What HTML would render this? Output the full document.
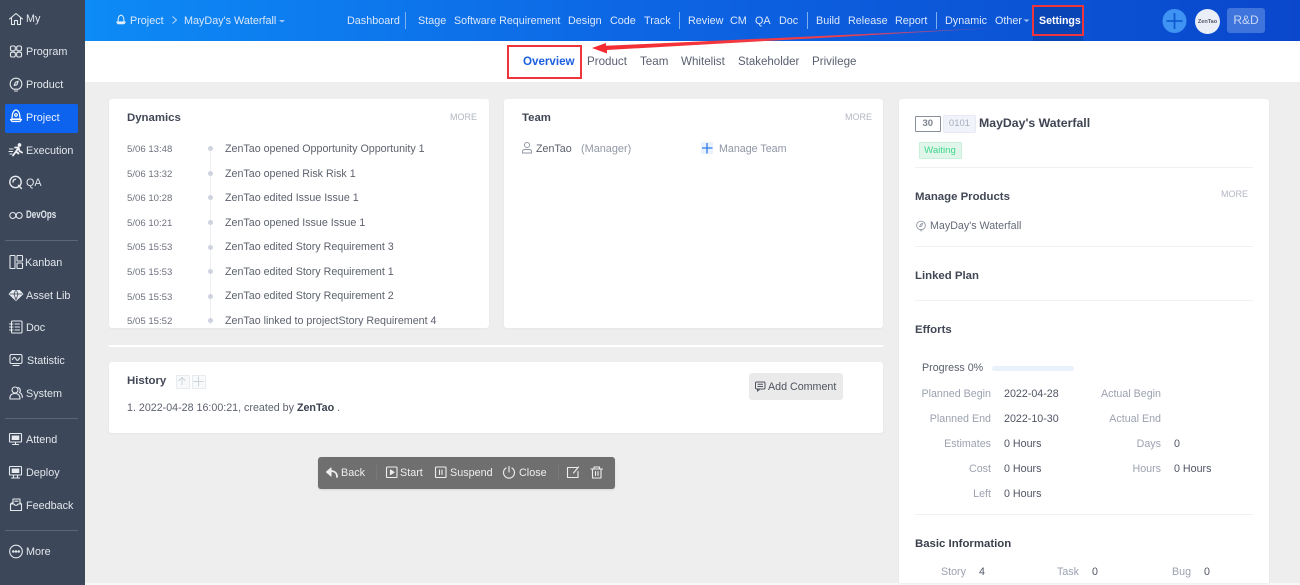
<!DOCTYPE html>
<html lang="en">
<head>
<meta charset="utf-8">
<title>MayDay's Waterfall</title>
<style>
html,body{margin:0;padding:0;background:#eeeeee}
body{width:1300px;height:585px;overflow:hidden;position:relative;background:#eeeeee;font-family:"Liberation Sans",sans-serif;font-size:10.7px;color:#5a5f6b;filter:blur(.3px)}
.b{position:absolute}
.t{position:absolute;white-space:nowrap;line-height:20px;height:20px;margin-top:1px}
.s{color:#e3e7ed;font-size:10.8px}
.n{color:#dbe8fb;font-size:10.8px;top:10px}
.sep{position:absolute;top:12px;width:1px;height:17px;background:#7fb0ee}
.sub{color:#5a6070;font-size:11.6px;top:51px}
.card{position:absolute;background:#fff;border-radius:3px;box-shadow:0 1px 2px rgba(0,0,0,.04)}
.h{font-weight:bold;color:#414755;font-size:11.4px}
.more{color:#b3b7c3;font-size:9px}
.d{color:#6d727e;font-size:9.6px;left:127px}
.r{color:#5d626e;left:225px}
.dot{position:absolute;left:207.5px;width:5.4px;height:5.4px;border-radius:50%;background:#cfd3df}
.hr{position:absolute;left:915px;width:338px;height:1px;background:#f1f2f4}
.l{color:#9ca2b0}
.v{color:#505565}
.w{color:#eee;font-size:10.8px;top:462px}
</style>
</head>
<body>
<div class="b" style="left:0;top:0;width:85px;height:585px;background:#3c4859"></div>
<div class="b" style="left:5px;top:104px;width:73px;height:29px;background:#0d62ee;border-radius:2px"></div>
<div class="b" style="left:5px;top:240px;width:73px;height:1px;background:#5c6677"></div>
<div class="b" style="left:5px;top:418px;width:73px;height:1px;background:#5c6677"></div>
<div class="b" style="left:5px;top:530px;width:73px;height:1px;background:#5c6677"></div>

<div class="b" style="left:85px;top:0;width:1215px;height:41px;background:linear-gradient(90deg,#0d8bf6 0%,#0d66e4 45%,#0a47cc 100%)"></div>
<div class="b" style="left:85px;top:41px;width:1215px;height:41px;background:#fff"></div>
<div class="b" style="left:85px;top:583px;width:1215px;height:2px;background:#f7f7f7"></div>
<div class="b" style="left:1033px;top:6px;width:50px;height:35px;background:#0a45b6"></div>

<span class="t s" style="left:26px;top:8px">My</span>
<span class="t s" style="left:26px;top:41px">Program</span>
<span class="t s" style="left:26px;top:74px">Product</span>
<span class="t s" style="left:26px;top:106.500px;color:#eaf1fe">Project</span>
<span class="t s" style="left:26px;top:139.500px">Execution</span>
<span class="t s" style="left:26px;top:172px">QA</span>
<span class="t s" style="left:26px;top:204px;font-weight:bold;transform:scaleX(.74);transform-origin:0 50%">DevOps</span>
<span class="t s" style="left:25px;top:252px">Kanban</span>
<span class="t s" style="left:26px;top:285px">Asset Lib</span>
<span class="t s" style="left:26px;top:317px">Doc</span>
<span class="t s" style="left:27px;top:350px">Statistic</span>
<span class="t s" style="left:26px;top:383px">System</span>
<span class="t s" style="left:26px;top:429px">Attend</span>
<span class="t s" style="left:26px;top:462px">Deploy</span>
<span class="t s" style="left:26px;top:495px">Feedback</span>
<span class="t s" style="left:26px;top:541px">More</span>

<span class="t n" style="left:130px">Project</span>
<span class="t n" style="left:184px">MayDay's Waterfall</span>
<span class="t n" style="left:347px">Dashboard</span>
<i class="sep" style="left:405px"></i>
<span class="t n" style="left:418px">Stage</span>
<span class="t n" style="left:454px;font-size:10.7px">Software Requirement</span>
<span class="t n" style="left:568px">Design</span>
<span class="t n" style="left:610px">Code</span>
<span class="t n" style="left:644px">Track</span>
<i class="sep" style="left:679px"></i>
<span class="t n" style="left:688px">Review</span>
<span class="t n" style="left:730px">CM</span>
<span class="t n" style="left:755px">QA</span>
<span class="t n" style="left:779px">Doc</span>
<i class="sep" style="left:807px"></i>
<span class="t n" style="left:816px">Build</span>
<span class="t n" style="left:848px">Release</span>
<span class="t n" style="left:895px">Report</span>
<i class="sep" style="left:936px"></i>
<span class="t n" style="left:945px">Dynamic</span>
<span class="t n" style="left:995px">Other</span>
<span class="t n" style="left:1039px;color:#fff;font-weight:bold;font-size:10.6px">Settings</span>

<div class="b" style="left:1195px;top:9px;width:25px;height:25px;border-radius:50%;background:#e9eef7"></div>
<span class="t" style="left:1195px;top:11px;width:25px;text-align:center;font-size:5.5px;font-weight:bold;color:#556">ZenTao</span>
<div class="b" style="left:1227px;top:8px;width:38px;height:25px;border-radius:3px;background:#3f74dc"></div>
<span class="t" style="left:1227px;top:9px;width:38px;text-align:center;font-size:12px;color:#c9d8f5">R&amp;D</span>

<span class="t" style="left:523px;top:51px;color:#1b5fe0;font-weight:bold;font-size:11.6px">Overview</span>
<span class="t sub" style="left:587px">Product</span>
<span class="t sub" style="left:640px">Team</span>
<span class="t sub" style="left:681px">Whitelist</span>
<span class="t sub" style="left:738px;font-size:11.5px">Stakeholder</span>
<span class="t sub" style="left:812px">Privilege</span>

<!-- Dynamics -->
<div class="card" style="left:109px;top:99px;width:380px;height:229px"></div>
<span class="t h" style="left:127px;top:107px">Dynamics</span>
<span class="t more" style="left:450px;top:105.500px">MORE</span>
<div class="b" style="left:210px;top:150px;width:1px;height:175px;background:#eef0f4"></div>
<div class="b" style="left:110px;top:138px;width:378px;height:187.5px;overflow:hidden">
  <div class="b" style="left:-110px;top:-138px;width:600px;height:400px">
    <span class="t d" style="top:139px">5/06 13:48</span><i class="dot" style="top:146px"></i><span class="t r" style="top:138px">ZenTao opened Opportunity Opportunity 1</span>
    <span class="t d" style="top:163.500px">5/06 13:32</span><i class="dot" style="top:171px"></i><span class="t r" style="top:163px">ZenTao opened Risk Risk 1</span>
    <span class="t d" style="top:188px">5/06 10:28</span><i class="dot" style="top:195px"></i><span class="t r" style="top:187px">ZenTao edited Issue Issue 1</span>
    <span class="t d" style="top:213px">5/06 10:21</span><i class="dot" style="top:220px"></i><span class="t r" style="top:211.500px">ZenTao opened Issue Issue 1</span>
    <span class="t d" style="top:237px">5/05 15:53</span><i class="dot" style="top:245px"></i><span class="t r" style="top:235.500px">ZenTao edited Story Requirement 3</span>
    <span class="t d" style="top:262px">5/05 15:53</span><i class="dot" style="top:269px"></i><span class="t r" style="top:260.500px">ZenTao edited Story Requirement 1</span>
    <span class="t d" style="top:286.500px">5/05 15:53</span><i class="dot" style="top:294px"></i><span class="t r" style="top:285px">ZenTao edited Story Requirement 2</span>
    <span class="t d" style="top:311px">5/05 15:52</span><i class="dot" style="top:318px"></i><span class="t r" style="top:310px">ZenTao linked to projectStory Requirement 4</span>
  </div>
</div>

<!-- Team -->
<div class="card" style="left:504px;top:99px;width:379px;height:229px"></div>
<span class="t h" style="left:522px;top:107px">Team</span>
<span class="t more" style="left:845px;top:105.500px">MORE</span>
<span class="t" style="left:536px;top:138px;color:#5a5f6b">ZenTao</span>
<span class="t" style="left:581px;top:138px;color:#9298a6;font-size:10.9px">(Manager)</span>
<div class="b" style="left:701px;top:142px;width:12px;height:12px;background:#eaf2fd"></div>
<span class="t" style="left:719px;top:138px;color:#8f95a5">Manage Team</span>

<div class="b" style="left:109px;top:345px;width:774px;height:2px;background:#fff"></div>

<!-- History -->
<div class="card" style="left:109px;top:362px;width:774px;height:71px"></div>
<span class="t h" style="left:127px;top:370px">History</span>
<div class="b" style="left:175.500px;top:375px;width:12px;height:12px;border:1px solid #e9ebf0;background:#f8f9fb"></div>
<div class="b" style="left:192px;top:375px;width:12px;height:12px;border:1px solid #e9ebf0;background:#f8f9fb"></div>
<span class="t" style="left:127px;top:397px;color:#5d626e">1. 2022-04-28 16:00:21, created by <b style="color:#3d4250">ZenTao</b> .</span>
<div class="b" style="left:749px;top:373px;width:94px;height:27px;background:#eaeaea;border-radius:3px"></div>
<span class="t" style="left:768px;top:376px;color:#4f5460">Add Comment</span>

<!-- Toolbar -->
<div class="b" style="left:318px;top:457px;width:297px;height:32px;background:#6f6f6f;border-radius:3px;box-shadow:0 1px 2px rgba(0,0,0,.1)"></div>
<span class="t w" style="left:341px">Back</span>
<span class="t w" style="left:400px">Start</span>
<span class="t w" style="left:450px">Suspend</span>
<span class="t w" style="left:519px">Close</span>
<div class="b" style="left:376px;top:465px;width:1px;height:15px;background:#797979"></div>
<div class="b" style="left:558px;top:465px;width:1px;height:15px;background:#797979"></div>

<!-- Right card -->
<div class="card" style="left:899px;top:99px;width:370px;height:484px;border-radius:3px 3px 0 0"></div>
<div class="b" style="left:915px;top:116px;width:23.500px;height:14px;border:1px solid #8a8f9c;border-radius:1px"></div>
<span class="t" style="left:915px;top:112.500px;width:25.500px;text-align:center;font-size:9.5px;font-weight:bold;color:#7d8290">30</span>
<div class="b" style="left:943px;top:115px;width:31px;height:15.500px;background:#f1f3fa;border:1px solid #e7eaf5;border-radius:2px"></div>
<span class="t" style="left:943px;top:112.500px;width:33px;text-align:center;font-size:9.5px;color:#a8aebd">0101</span>
<span class="t" style="left:979px;top:112px;font-weight:bold;font-size:12.3px;color:#3e4452">MayDay's Waterfall</span>
<div class="b" style="left:918.500px;top:142px;width:41px;height:15px;background:#e0f6ea;border:1px solid #c9f0da;border-radius:1px"></div>
<span class="t" style="left:919px;top:140px;width:42px;text-align:center;font-size:9.6px;color:#3fd68c">Waiting</span>
<i class="hr" style="top:167px"></i>
<span class="t h" style="left:915px;top:186px">Manage Products</span>
<span class="t more" style="left:1221px;top:183px">MORE</span>
<span class="t" style="left:930px;top:215px;color:#646a78">MayDay's Waterfall</span>
<i class="hr" style="top:246px"></i>
<span class="t h" style="left:915px;top:265px">Linked Plan</span>
<i class="hr" style="top:300px"></i>
<span class="t h" style="left:915px;top:319px">Efforts</span>
<span class="t" style="left:922px;top:356.500px;color:#5a5f6b">Progress 0%</span>
<div class="b" style="left:992px;top:366px;width:82px;height:5px;background:#e9f1fb;border-radius:3px"></div>

<span class="t l" style="right:309px;top:383px">Planned Begin</span><span class="t v" style="left:1004px;top:383px">2022-04-28</span>
<span class="t l" style="right:139px;top:383px">Actual Begin</span>
<span class="t l" style="right:309px;top:408px">Planned End</span><span class="t v" style="left:1004px;top:408px">2022-10-30</span>
<span class="t l" style="right:139px;top:408px">Actual End</span>
<span class="t l" style="right:309px;top:433px">Estimates</span><span class="t v" style="left:1004px;top:433px">0 Hours</span>
<span class="t l" style="right:139px;top:433px">Days</span><span class="t v" style="left:1174px;top:433px">0</span>
<span class="t l" style="right:309px;top:458px">Cost</span><span class="t v" style="left:1004px;top:458px">0 Hours</span>
<span class="t l" style="right:139px;top:458px">Hours</span><span class="t v" style="left:1174px;top:458px">0 Hours</span>
<span class="t l" style="right:309px;top:483px">Left</span><span class="t v" style="left:1004px;top:483px">0 Hours</span>
<i class="hr" style="top:514px"></i>
<span class="t h" style="left:915px;top:533px;color:#3a3f4b">Basic Information</span>
<span class="t l" style="left:941px;top:561px">Story</span><span class="t v" style="left:979px;top:561px">4</span>
<span class="t l" style="left:1057px;top:561px">Task</span><span class="t v" style="left:1092px;top:561px">0</span>
<span class="t l" style="left:1172px;top:561px">Bug</span><span class="t v" style="left:1204px;top:561px">0</span>

<svg class="b" style="left:0;top:0" width="1300" height="585" viewBox="0 0 1300 585" fill="none">
  <!-- sidebar icons -->
  <g stroke="#e6e9ee" stroke-width="1.1" stroke-linejoin="round" stroke-linecap="round">
    <path transform="translate(16,19)" d="M-6.500,0 L0,-5.500 L6.500,0 M-4.500,-1 V5.500 H-1.500 V1.500 H1.500 V5.500 H4.500 V-1"/>
    <g transform="translate(16,51.500)"><rect x="-5.500" y="-5.500" width="4.800" height="4.800" rx="1.500"/><rect x=".7" y="-5.500" width="4.800" height="4.800" rx="1.500"/><rect x="-5.500" y=".7" width="4.800" height="4.800" rx="1.500"/><rect x=".7" y=".7" width="4.800" height="4.800" rx="1.500"/></g>
    <g transform="translate(16,84)"><path d="M-2.500,5.200 A5.800,5.800 0 1 1 2.500,5.200 Z"/><path d="M-1.500,7 H1.500"/><path d="M2.200,-2.800 L.8,.8 L-1.800,1.500 L-.6,-1.600 Z"/></g>
    <g transform="translate(16,116.500)" stroke="#fff" stroke-width="1.200"><path d="M-4,2.500 C-4,-1 -3.500,-6 0,-6.500 C3.500,-6 4,-1 4,2.500 Z"/><path d="M-5.500,3 H5.500 L4,5 H-4 Z"/><circle cx="0" cy="-1.500" r="1.300"/></g>
    <g transform="translate(16,150)" stroke="#eef0f3"><circle cx="3.500" cy="-5" r="1.300" fill="#eef0f3"/><path stroke-width="1.800" d="M-3,5.500 L0,1.500 L2.500,-2.500 L-1,-2.500 M2.500,-2.500 L3.500,1 L6,2.500 M0,1.500 L2.500,3.500"/><path d="M-6.500,-1 H-3 M-7,1.500 H-3.500 M-6,4 H-4"/></g>
    <g transform="translate(16,182.500)" stroke-width="1.400"><circle cx="-.5" cy="-.5" r="5.700"/><path d="M2.500,2.800 L5.500,6 M-3,-.5 A2.500,2.500 0 0 1 -.5,-3.200"/></g>
    <g transform="translate(16,215.500)" stroke-width="1.100"><circle cx="-3.200" cy="0" r="3"/><circle cx="3.200" cy="0" r="3"/></g>
    <g transform="translate(16,262)"><rect x="-6" y="-6.500" width="5" height="13" rx=".5"/><rect x="1" y="-6.500" width="5.500" height="5.500" rx=".5"/><rect x="1" y="1" width="5.500" height="5.500" rx=".5"/></g>
    <g transform="translate(16,295)"><path d="M-3.500,-4.500 H3.500 L6.800,-1 L0,5.500 L-6.800,-1 Z" fill="#e6e9ee"/><path stroke="#3c4859" stroke-width=".8" d="M-6,-1 H6 M-2,-1 L0,5 L2,-1 M-2,-1 L-.5,-4.500 M2,-1 L.5,-4.500"/></g>
    <g transform="translate(16,327)"><rect x="-4.500" y="-6" width="10.500" height="12" rx="1"/><path d="M-6.500,-3 H-3 M-6.500,0 H-3 M-6.500,3 H-3 M-1,-3 H3.500 M-1,0 H3.500 M-1,3 H3.500"/></g>
    <g transform="translate(16,360)"><rect x="-6" y="-5.500" width="12" height="9" rx="1.500"/><path d="M-3.500,-.5 C-2,-3.500 -1,-3 0,-1 C1,1 2,1 3.500,-2 M-3,5.500 H3"/></g>
    <g transform="translate(16,393)"><circle cx="-1" cy="-3" r="3"/><path d="M-6,6 C-6.500,2 -4,.5 -1,.5 C2,.5 4,2 4,6 Z M2,-5.500 A3,3 0 0 1 3.500,-.5 C5.500,.5 6.500,2 6.300,4.500"/></g>
    <g transform="translate(15.500,439)"><rect x="-6" y="-5.500" width="12" height="8.500" rx=".8"/><rect x="-3.800" y="-3.500" width="7.600" height="4.500" fill="#e6e9ee" stroke="none"/><path d="M-3,5.500 H3 M0,3 V5.500"/></g>
    <g transform="translate(15.500,472)"><rect x="-6" y="-5.500" width="12" height="8.500" rx=".8"/><rect x="-3.800" y="-3.500" width="7.600" height="4.500" fill="#e6e9ee" stroke="none"/><path d="M-4,6 H4 M-2,3 V6 M2,3 V6"/></g>
    <g transform="translate(16,505)"><path d="M-3,-6 H4 V-1.500 M-3,-6 V-1.500 M-5.500,-1 L-3,-3 M5.500,-1 L4,-2.500 M-5.500,-1 V5.500 H5.500 V-1 L2,-1 C1.500,.8 -1.500,.8 -2,-1 Z M-1.200,-3.800 H2"/></g>
    <g transform="translate(16,551.500)"><circle r="6.300"/><circle cx="-2.700" r=".7" fill="#e6e9ee"/><circle cx="0" r=".7" fill="#e6e9ee"/><circle cx="2.700" r=".7" fill="#e6e9ee"/></g>
  </g>
  <!-- header icons -->
  <g transform="translate(121,20) scale(.75)" stroke="#e3eefc" stroke-width="1.400" fill="none"><path d="M-4,2.500 C-4,-1 -3.500,-6 0,-6.500 C3.500,-6 4,-1 4,2.500 Z"/><path d="M-5.500,3 H5.500 L4,5 H-4 Z" fill="#e3eefc"/></g>
  <path d="M172.500,16.500 L176.500,20 L172.500,23.500" stroke="#bcd7f8" stroke-width="1"/>
  <path d="M279,20 H285 L282,22.500 Z" fill="#a9c9f3"/>
  <path d="M1023.500,19.500 H1029.500 L1026.500,22 Z" fill="#a9c4ef"/>
  <circle cx="1174.500" cy="21" r="12" fill="#3f93f2"/>
  <path d="M1174.500,13 V29 M1166.500,21 H1182.500" stroke="#0f5bd0" stroke-width="1.800"/>
  <!-- annotations -->
  <rect x="1033" y="6" width="50" height="29" stroke="#f0343c" stroke-width="2"/>
  <rect x="508" y="46" width="73" height="32" stroke="#f0343c" stroke-width="2"/>
  <defs><linearGradient id="ar" x1="592" y1="0" x2="1010" y2="0" gradientUnits="userSpaceOnUse"><stop offset="0" stop-color="#f42c32"/><stop offset=".6" stop-color="#f0404a"/><stop offset="1" stop-color="#c84a8c" stop-opacity=".4"/></linearGradient></defs>
  <path d="M592,48 L606,43 L606,45.800 L1005,27.500 L607,50 L607,53.500 Z" fill="url(#ar)"/>
  <!-- team -->
  <g stroke="#8e94a2" stroke-width=".9"><circle cx="527" cy="145" r="2.600"/><path d="M522.500,153 V151.500 C522.500,150 523.500,149.500 525,149.500 H529 C530.500,149.500 531.500,150 531.500,151.500 V153 Z"/></g>
  <path d="M707,143 V153.500 M702,148 H712.500" stroke="#2f7be8" stroke-width="1.300"/>
  <!-- history icons -->
  <path d="M182,385 V378 M178.500,381 L182,377.500 L185.500,381" stroke="#cfd3dc" stroke-width="1"/>
  <path d="M198.500,376.500 V386.500 M193.500,381.500 H203.500" stroke="#cfd3dc" stroke-width="1"/>
  <g stroke="#4f5460" stroke-width="1"><rect x="755.500" y="382" width="9.500" height="7" rx="1.200"/><path d="M757.500,389 L757.500,391 L760,389"/><path d="M757.500,384.300 H763 M757.500,386.500 H763"/></g>
  <!-- toolbar icons -->
  <g stroke="#eee" stroke-width="1.100" stroke-linecap="round" stroke-linejoin="round">
    <path d="M331,468 L326.500,472 L331,476 Z" fill="#eee"/><path d="M330,471 C334,471 337,472 337,477" stroke-width="1.800"/>
    <rect x="386.500" y="467" width="10.500" height="10.500" rx=".8"/><path d="M390.500,470 L394,472.300 L390.500,474.500 Z" fill="#eee"/>
    <rect x="435.500" y="467" width="10.500" height="10.500" rx=".8"/><path d="M439.500,470 V474.500 M442,470 V474.500"/>
    <path d="M506,468 A5.500,5.500 0 1 0 512,468 M509,466.500 V472"/>
    <path d="M577,467.500 H567.500 V477.500 H578 V471.500 M573.500,473 L578.500,467"/>
    <path d="M591,469 H602.500 M594,469 V467 H599.500 V469 M592.500,469 V478 H601 V469 M595.500,471.500 V475.500 M598,471.500 V475.500"/>
  </g>
  <!-- right panel bulb -->
  <g transform="translate(921,225.500) scale(.75)" stroke="#8e94a2" stroke-width="1.100"><path d="M-2.500,5.200 A5.800,5.800 0 1 1 2.500,5.200 Z"/><path d="M-1.500,7 H1.500"/><path d="M2.200,-2.800 L.8,.8 L-1.800,1.500 L-.6,-1.600 Z"/></g>
</svg>
</body>
</html>
